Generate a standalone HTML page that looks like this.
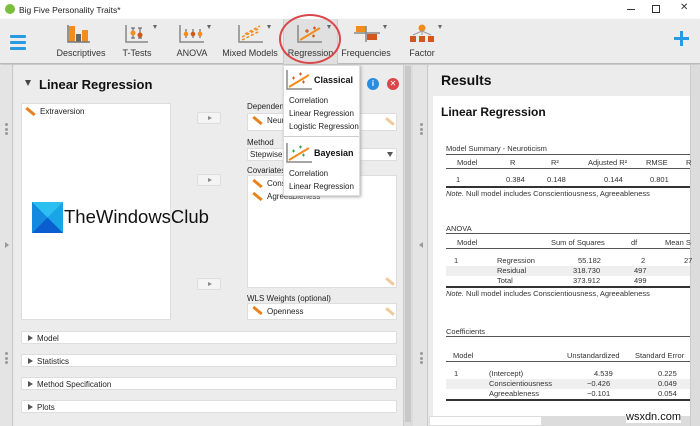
<!DOCTYPE html>
<html><head><meta charset="utf-8"><style>
*{margin:0;padding:0;box-sizing:border-box}
body{width:700px;height:426px;overflow:hidden;background:#e9e9e9;font-family:"Liberation Sans",sans-serif;font-size:8px;color:#222;position:relative}
.a{position:absolute}
.w{background:#fff}
.lbl{font-size:8px;color:#222;white-space:nowrap}
.btn{position:absolute;width:24px;height:12px;background:#f4f4f4;border:1px solid #ddd;border-radius:2px}
.btn:after{content:"";position:absolute;left:10px;top:3px;border-left:4px solid #888;border-top:2.5px solid transparent;border-bottom:2.5px solid transparent}
.ruler{position:absolute;width:11px;height:3px;background:#e8821e;transform:rotate(40deg)}
.rl{position:absolute;width:10px;height:3px;background:#f2c99a;transform:rotate(40deg)}
.sec{position:absolute;left:21px;width:376px;height:13px;background:#fff;border:1px solid #ddd;border-radius:2px;font-size:8px;padding:2px 0 0 15px}
.sec:before{content:"";position:absolute;left:6px;top:3px;border-left:5px solid #555;border-top:3px solid transparent;border-bottom:3px solid transparent}
.tb{position:absolute;font-size:9px;color:#333;white-space:nowrap;text-align:center;top:48px}
.dd{position:absolute;top:25px;border-top:4px solid #666;border-left:2.5px solid transparent;border-right:2.5px solid transparent}
.t{position:absolute;font-size:7.5px;color:#333;white-space:nowrap}
.line{position:absolute;left:446px;right:10px;height:1px;background:#555}
.dots{position:absolute;width:3px}
.dots i{display:block;width:3px;height:3px;border-radius:50%;background:#999;margin-bottom:1.5px}
</style></head><body>
<div class="a w" style="left:0;top:0;width:700px;height:19px"></div>
<div class="a" style="left:5px;top:4px;width:10px;height:10px;border-radius:50%;background:#7bbd3c"></div>
<div class="a" style="left:19px;top:5px;font-size:8.5px;color:#222">Big Five Personality Traits*</div>
<div class="a" style="left:627px;top:9px;width:8px;height:1px;background:#333"></div>
<div class="a" style="left:652px;top:5px;width:8px;height:8px;border:1px solid #333"></div>
<div class="a" style="left:680px;top:2px;font-size:10px;color:#333">✕</div>
<div class="a" style="left:0;top:19px;width:700px;height:45px;background:#ececec;border-bottom:1px solid #bbb;box-shadow:0 1px 2px #bbb"></div>
<div class="a" style="left:10px;top:35px;width:16px;height:3px;background:#2a9ae0;border-radius:1px"></div>
<div class="a" style="left:10px;top:41px;width:16px;height:3px;background:#2a9ae0;border-radius:1px"></div>
<div class="a" style="left:10px;top:47px;width:16px;height:3px;background:#2a9ae0;border-radius:1px"></div>
<svg class="a" style="left:66px;top:24px" width="30" height="20"><rect x="3" y="2" width="6" height="16" fill="#f28c1c"/><rect x="10" y="10" width="5" height="8" fill="#666"/><rect x="16" y="6" width="6" height="12" fill="#f28c1c"/><path d="M2 1v17h22" stroke="#777" fill="none" stroke-width="1.5"/></svg>
<div class="tb" style="left:56px;width:50px">Descriptives</div>
<svg class="a" style="left:124px;top:24px" width="26" height="20"><path d="M2 1v17h22" stroke="#888" fill="none" stroke-width="1.5"/><path d="M9 4v10M7 4h4M7 14h4M16 4v10M14 4h4M14 14h4" stroke="#555"/><circle cx="9" cy="9" r="2.5" fill="#f28c1c"/><circle cx="16" cy="11" r="2.5" fill="#d4561c"/></svg>
<div class="dd" style="left:153px"></div>
<div class="tb" style="left:116px;width:42px">T-Tests</div>
<svg class="a" style="left:178px;top:24px" width="28" height="20"><path d="M2 1v17h24" stroke="#888" fill="none" stroke-width="1.5"/><path d="M8 5v9M15 5v9M22 5v9" stroke="#555"/><circle cx="8" cy="10" r="2.3" fill="#f28c1c"/><circle cx="15" cy="10" r="2.3" fill="#d4561c"/><circle cx="22" cy="10" r="2.3" fill="#f28c1c"/></svg>
<div class="dd" style="left:207px"></div>
<div class="tb" style="left:172px;width:40px">ANOVA</div>
<svg class="a" style="left:237px;top:24px" width="28" height="20"><path d="M2 1v17h24" stroke="#888" fill="none" stroke-width="1.5"/><path d="M5 13l18-9M5 16l18-9M8 10l15-8" stroke="#f28c1c" stroke-width="1.5" stroke-dasharray="3 2"/></svg>
<div class="dd" style="left:267px"></div>
<div class="tb" style="left:222px;width:56px">Mixed Models</div>
<div class="a" style="left:283px;top:19px;width:1px;height:45px;background:#ccc"></div>
<div class="a" style="left:284px;top:19px;width:53px;height:45px;background:#e0e0e0"></div>
<svg class="a" style="left:296px;top:24px" width="28" height="20"><path d="M2 1v17h24" stroke="#888" fill="none" stroke-width="1.5"/><path d="M4 16L24 4" stroke="#f28c1c" stroke-width="2"/><path d="M9 7h4M11 5v4M17 4h3M18.5 2.5v3M16 12h3M17.5 10.5v3" stroke="#d4561c" stroke-width="1.2"/></svg>
<div class="dd" style="left:327px"></div>
<div class="tb" style="left:284px;width:53px">Regression</div>
<div class="a" style="left:337px;top:19px;width:1px;height:45px;background:#ccc"></div>
<svg class="a" style="left:352px;top:24px" width="30" height="20"><rect x="4" y="2" width="10" height="6" fill="#f28c1c"/><rect x="15" y="10" width="10" height="6" fill="#d4561c"/><path d="M2 9h26M14 2v16" stroke="#888" stroke-width="1.5"/></svg>
<div class="dd" style="left:383px"></div>
<div class="tb" style="left:340px;width:52px">Frequencies</div>
<svg class="a" style="left:408px;top:24px" width="28" height="20"><circle cx="14" cy="4" r="3.5" fill="#f28c1c"/><path d="M14 7v4M5 11L14 7L23 11" stroke="#999" fill="none"/><rect x="2" y="12" width="6" height="6" fill="#d4561c"/><rect x="11" y="12" width="6" height="6" fill="#d4561c"/><rect x="20" y="12" width="6" height="6" fill="#d4561c"/></svg>
<div class="dd" style="left:438px"></div>
<div class="tb" style="left:402px;width:40px">Factor</div>
<div class="a" style="left:674px;top:37px;width:15px;height:3px;background:#2a9ae0"></div>
<div class="a" style="left:680px;top:31px;width:3px;height:15px;background:#2a9ae0"></div>
<div class="a" style="left:279px;top:14px;width:62px;height:50px;border:2px solid #d9474b;border-radius:50%"></div>

<div class="a" style="left:0;top:65px;width:13px;height:361px;background:#e4e4e4;border-right:1px solid #c9c9c9"></div>
<div class="dots" style="left:5px;top:123px"><i></i><i></i><i></i></div>
<div class="a" style="left:5px;top:242px;border-left:4px solid #999;border-top:3px solid transparent;border-bottom:3px solid transparent"></div>
<div class="dots" style="left:5px;top:352px"><i></i><i></i><i></i></div>
<div class="a" style="left:14px;top:65px;width:389px;height:361px;background:#ececec"></div>
<div class="a" style="left:403px;top:65px;width:10px;height:361px;background:#dcdcdc;border-left:1px solid #ccc"></div>
<div class="a" style="left:405px;top:66px;width:6px;height:356px;background:#c8c8c8"></div>
<div class="a" style="left:25px;top:80px;border-top:6px solid #444;border-left:3.5px solid transparent;border-right:3.5px solid transparent"></div>
<div class="a" style="left:39px;top:77px;font-size:13px;font-weight:bold;color:#111">Linear Regression</div>
<div class="a" style="left:367px;top:78px;width:12px;height:12px;border-radius:50%;background:#2a8ee0;color:#fff;font-size:8px;font-weight:bold;text-align:center;line-height:12px">i</div>
<div class="a" style="left:387px;top:78px;width:12px;height:12px;border-radius:50%;background:#d9474b;color:#fff;font-size:8px;text-align:center;line-height:12px">✕</div>
<div class="a w" style="left:21px;top:103px;width:150px;height:217px;border:1px solid #ddd"></div>
<div class="ruler" style="left:25px;top:110px"></div>
<div class="a lbl" style="left:40px;top:107px">Extraversion</div>
<svg class="a" style="left:32px;top:202px" width="31" height="31"><rect width="31" height="31" fill="#1aa3e8"/><path d="M0 0L15.5 15.5L31 0Z" fill="#2cc0f0"/><path d="M0 31L15.5 15.5L31 31Z" fill="#0a5ed0"/><path d="M0 0L15.5 15.5L0 31Z" fill="#1489e0"/></svg>
<div class="a" style="left:64px;top:206px;font-size:18.5px;color:#111">TheWindowsClub</div>

<div class="btn" style="left:197px;top:112px"></div>
<div class="btn" style="left:197px;top:174px"></div>
<div class="btn" style="left:197px;top:278px"></div>
<div class="a lbl" style="left:247px;top:102px">Dependent Variable</div>
<div class="a w" style="left:247px;top:113px;width:150px;height:18px;border:1px solid #ddd"></div>
<div class="ruler" style="left:252px;top:119px"></div>
<div class="a lbl" style="left:267px;top:116px">Neuroticism</div>
<div class="rl" style="left:385px;top:120px"></div>
<div class="a lbl" style="left:247px;top:138px">Method</div>
<div class="a w" style="left:247px;top:148px;width:150px;height:13px;border:1px solid #ddd"></div>
<div class="a lbl" style="left:250px;top:150px">Stepwise</div>
<div class="a" style="left:387px;top:152px;border-top:5px solid #555;border-left:3px solid transparent;border-right:3px solid transparent"></div>
<div class="a lbl" style="left:247px;top:166px">Covariates</div>
<div class="a w" style="left:247px;top:175px;width:150px;height:113px;border:1px solid #ddd"></div>
<div class="ruler" style="left:252px;top:182px"></div>
<div class="a lbl" style="left:267px;top:179px">Conscientiousness</div>
<div class="ruler" style="left:252px;top:195px"></div>
<div class="a lbl" style="left:267px;top:192px">Agreeableness</div>
<div class="rl" style="left:385px;top:280px"></div>
<div class="a lbl" style="left:247px;top:294px">WLS Weights (optional)</div>
<div class="a w" style="left:247px;top:303px;width:150px;height:17px;border:1px solid #ddd"></div>
<div class="ruler" style="left:252px;top:309px"></div>
<div class="a lbl" style="left:267px;top:307px">Openness</div>
<div class="rl" style="left:385px;top:310px"></div>
<div class="sec" style="top:331px">Model</div>
<div class="sec" style="top:354px">Statistics</div>
<div class="sec" style="top:377px">Method Specification</div>
<div class="sec" style="top:400px">Plots</div>

<div class="a w" style="left:283px;top:65px;width:77px;height:131px;border:1px solid #ddd;box-shadow:1px 1px 3px #aaa"></div>
<svg class="a" style="left:286px;top:70px" width="26" height="20"><path d="M1 0v19h25" stroke="#888" fill="none" stroke-width="1.5"/><path d="M3 17L23 5" stroke="#f28c1c" stroke-width="2"/><path d="M6 8h3M7.5 6.5v3M13 4h3M14.5 2.5v3M16 12h3M17.5 10.5v3" stroke="#d4561c"/></svg>
<div class="a" style="left:314px;top:75px;font-size:9px;font-weight:bold;color:#111">Classical</div>
<div class="a lbl" style="left:289px;top:96px">Correlation</div>
<div class="a lbl" style="left:289px;top:109px">Linear Regression</div>
<div class="a lbl" style="left:289px;top:122px">Logistic Regression</div>
<div class="a" style="left:284px;top:136px;width:75px;height:1px;background:#ccc"></div>
<svg class="a" style="left:286px;top:143px" width="26" height="20"><path d="M1 0v19h25" stroke="#888" fill="none" stroke-width="1.5"/><path d="M3 17L23 5" stroke="#f28c1c" stroke-width="2"/><path d="M6 8h3M7.5 6.5v3M13 4h3M14.5 2.5v3M16 12h3M17.5 10.5v3" stroke="#2aa84a"/></svg>
<div class="a" style="left:314px;top:148px;font-size:9px;font-weight:bold;color:#111">Bayesian</div>
<div class="a lbl" style="left:289px;top:169px">Correlation</div>
<div class="a lbl" style="left:289px;top:182px">Linear Regression</div>

<div class="a" style="left:413px;top:65px;width:15px;height:361px;background:#e4e4e4;border-right:1px solid #c9c9c9"></div>
<div class="dots" style="left:420px;top:123px"><i></i><i></i><i></i></div>
<div class="a" style="left:419px;top:242px;border-right:4px solid #999;border-top:3px solid transparent;border-bottom:3px solid transparent"></div>
<div class="dots" style="left:420px;top:352px"><i></i><i></i><i></i></div>

<div class="a" style="left:429px;top:65px;width:261px;height:361px;background:#ececec"></div>
<div class="a" style="left:441px;top:72px;font-size:14px;font-weight:bold;color:#111">Results</div>
<div class="a w" style="left:433px;top:96px;width:257px;height:330px"></div>
<div class="a" style="left:690px;top:65px;width:10px;height:361px;background:#dcdcdc;border-left:1px solid #ccc"></div>
<div class="a" style="left:429px;top:416px;width:261px;height:10px;background:#dcdcdc"></div>
<div class="a" style="left:430px;top:417px;width:111px;height:8px;background:#fff"></div>
<div class="a" style="left:441px;top:105px;font-size:12px;font-weight:bold;color:#111">Linear Regression</div>

<div class="t" style="left:446px;top:144px">Model Summary - Neuroticism</div>
<div class="line" style="top:154px"></div>
<div class="t" style="left:457px;top:158px">Model</div><div class="t" style="left:510px;top:158px">R</div><div class="t" style="left:551px;top:158px">R²</div><div class="t" style="left:588px;top:158px">Adjusted R²</div><div class="t" style="left:646px;top:158px">RMSE</div><div class="t" style="left:686px;top:158px">R</div>
<div class="line" style="top:168px;height:1px"></div>
<div class="t" style="left:456px;top:175px">1</div><div class="t" style="left:506px;top:175px">0.384</div><div class="t" style="left:547px;top:175px">0.148</div><div class="t" style="left:604px;top:175px">0.144</div><div class="t" style="left:650px;top:175px">0.801</div>
<div class="line" style="top:186px;height:2px;background:#333"></div>
<div class="t" style="left:446px;top:189px"><i>Note.</i> Null model includes Conscientiousness, Agreeableness</div>

<div class="t" style="left:446px;top:224px">ANOVA</div>
<div class="line" style="top:233px"></div>
<div class="t" style="left:457px;top:238px">Model</div><div class="t" style="left:551px;top:238px">Sum of Squares</div><div class="t" style="left:631px;top:238px">df</div><div class="t" style="left:665px;top:238px">Mean S</div>
<div class="line" style="top:248px"></div>
<div class="a" style="left:446px;top:266px;width:244px;height:10px;background:#efefef"></div>
<div class="t" style="left:454px;top:256px">1</div><div class="t" style="left:497px;top:256px">Regression</div><div class="t" style="left:578px;top:256px">55.182</div><div class="t" style="left:641px;top:256px">2</div><div class="t" style="left:684px;top:256px">27</div>
<div class="t" style="left:497px;top:266px">Residual</div><div class="t" style="left:573px;top:266px">318.730</div><div class="t" style="left:634px;top:266px">497</div>
<div class="t" style="left:497px;top:276px">Total</div><div class="t" style="left:573px;top:276px">373.912</div><div class="t" style="left:634px;top:276px">499</div>
<div class="line" style="top:286px;height:2px;background:#333"></div>
<div class="t" style="left:446px;top:289px"><i>Note.</i> Null model includes Conscientiousness, Agreeableness</div>

<div class="t" style="left:446px;top:327px">Coefficients</div>
<div class="line" style="top:336px"></div>
<div class="t" style="left:453px;top:351px">Model</div><div class="t" style="left:567px;top:351px">Unstandardized</div><div class="t" style="left:635px;top:351px">Standard Error</div>
<div class="line" style="top:361px"></div>
<div class="a" style="left:446px;top:379px;width:244px;height:10px;background:#efefef"></div>
<div class="t" style="left:454px;top:369px">1</div><div class="t" style="left:489px;top:369px">(Intercept)</div><div class="t" style="left:594px;top:369px">4.539</div><div class="t" style="left:658px;top:369px">0.225</div>
<div class="t" style="left:489px;top:379px">Conscientiousness</div><div class="t" style="left:587px;top:379px">−0.426</div><div class="t" style="left:658px;top:379px">0.049</div>
<div class="t" style="left:489px;top:389px">Agreeableness</div><div class="t" style="left:587px;top:389px">−0.101</div><div class="t" style="left:658px;top:389px">0.054</div>
<div class="line" style="top:399px;height:2px;background:#333"></div>
<div class="a" style="left:626px;top:411px;font-size:11px;color:#111;background:#fff">wsxdn.com</div>
</body></html>
